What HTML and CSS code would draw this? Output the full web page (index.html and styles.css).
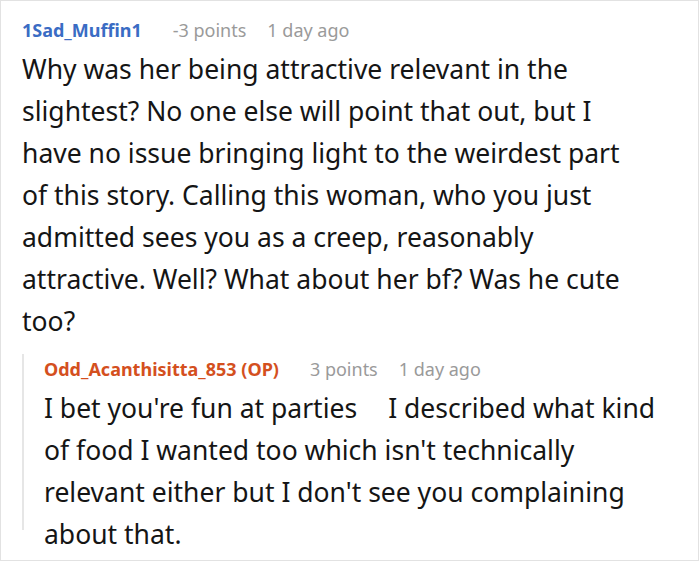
FILE: index.html
```html
<!DOCTYPE html>
<html>
<head>
<meta charset="utf-8">
<link rel="stylesheet" href="styles.css">
</head>
<body>
<div class="card">
  <div class="comment">
    <div class="meta">
      <span class="user">1Sad_Muffin1</span>
      <span class="points">-3 points</span>
      <span class="time">1 day ago</span>
    </div>
    <p class="text">Why was her being attractive relevant in the<br>slightest? No one else will point that out, but I<br>have no issue bringing light to the weirdest part<br>of this story. Calling this woman, who you just<br>admitted sees you as a creep, reasonably<br>attractive. Well? What about her bf? Was he cute<br>too?</p>
  </div>
  <div class="reply">
    <div class="meta">
      <span class="user op">Odd_Acanthisitta_853 (OP)</span>
      <span class="points">3 points</span>
      <span class="time">1 day ago</span>
    </div>
    <p class="text">I bet you're fun at parties<span class="gap"></span>I described what kind<br>of food I wanted too which isn't technically<br>relevant either but I don't see you complaining<br>about that.</p>
  </div>
</div>
</body>
</html>
```

FILE: styles.css
```css
html, body {
  margin: 0;
  padding: 0;
  background: #ffffff;
}

.card {
  box-sizing: border-box;
  width: 699px;
  height: 561px;
  border: 1px solid #e2e2e2;
  padding: 14px 0 0 21px;
  overflow: hidden;
  font-family: "Noto Sans", "Open Sans", sans-serif;
}

.meta {
  display: flex;
  align-items: center;
  height: 30px;
  line-height: 30px;
  font-size: 18px;
  margin-bottom: 3px;
  white-space: nowrap;
}

.user {
  font-weight: 700;
  color: #3a6cc4;
}

.user.op {
  color: #d4501e;
}

.points {
  color: #9a9a9a;
  margin-left: 31px;
}

.time {
  color: #9a9a9a;
  margin-left: 21px;
}

.text {
  margin: 0;
  font-size: 26.5px;
  line-height: 42px;
  color: #151515;
  white-space: nowrap;
}

.gap {
  display: inline-block;
  width: 31px;
}

.reply {
  margin-top: 26px;
  height: 176px;
  border-left: 2px solid #e6e6e6;
  padding-left: 20px;
}

.reply .meta {
  margin-top: -14px;
}
```
